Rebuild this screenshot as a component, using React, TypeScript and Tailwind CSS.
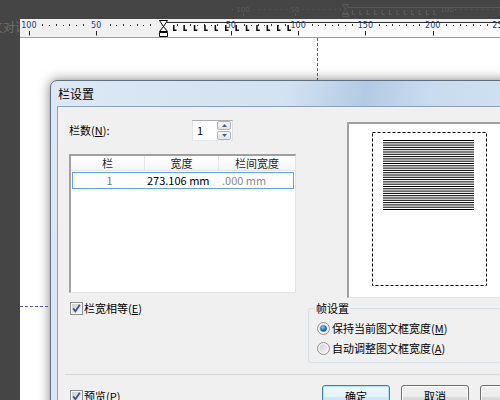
import React from "react";

const FONT = '"Noto Sans CJK SC", "Noto Sans", sans-serif';

function GhostRuler() {
  const dots: number[] = [];
  for (let x = 232; x < 340; x += 5.4) dots.push(x);
  const ls: number[] = [];
  for (let i = 0; i < 12; i++) ls.push(352 + i * 7.4);
  const dots2: number[] = [];
  for (let x = 455; x < 500; x += 5.4) dots2.push(x);
  return (
    <svg width="500" height="19" className="absolute left-0 top-0">
      <g fill="#5b5b5b" fontSize="7" fontFamily="DejaVu Sans, sans-serif">
        <text x="243" y="12" textAnchor="middle">100</text>
        <text x="295" y="12" textAnchor="middle">50</text>
        <text x="447" y="12" textAnchor="middle">100</text>
      </g>
      <line x1="243.5" y1="13" x2="243.5" y2="16" stroke="#5b5b5b" />
      <line x1="295.5" y1="13" x2="295.5" y2="16" stroke="#5b5b5b" />
      {dots.map((x, i) =>
        Math.abs(x - 243) < 7 || Math.abs(x - 295) < 6 ? null : (
          <rect key={i} x={x} y="9" width="1" height="1" fill="#5e5e5e" />
        )
      )}
      {dots2.map((x, i) => (
        <rect key={i} x={x} y="9" width="1" height="1" fill="#5e5e5e" />
      ))}
      <line x1="348" y1="7.5" x2="500" y2="7.5" stroke="#585858" />
      <path d="M342.5 4.5 H348.5 L345.5 9.5 Z M345.5 9.5 L348.5 13.5 H342.5 Z M342.5 14.5 H348.5 V16.5 H342.5 Z" fill="none" stroke="#5a5a5a" />
      {ls.map((x, i) => (
        <path key={i} d={`M${x + 0.5} 10 V14.5 H${x + 3}`} fill="none" stroke="#5a5a5a" strokeWidth="1.2" />
      ))}
    </svg>
  );
}

function Ruler() {
  const z = 143.5;
  const k = 1.346;
  const majors = [-100, -50, 0, 50, 100, 150, 200, 250];
  const minors: number[] = [];
  for (let u = -115; u <= 260; u += 5) {
    if (u % 50 === 0) continue;
    const m = ((u % 50) + 50) % 50;
    if (m === 5 || m === 45) continue;
    if (u > -5 && u < 5) continue;
    minors.push(u);
  }
  const ls: number[] = [];
  for (let i = 0; i < 12; i++) ls.push(153 + i * 10.4);
  return (
    <div className="h-[19px] shrink-0 border-b border-[#a0a0a0] bg-[#f0f0f0]">
      <svg width="480" height="18" className="block">
        <rect x="147" y="3" width="333" height="15" fill="#fafafa" />
        <line x1="147" y1="3.5" x2="480" y2="3.5" stroke="#2b2b2b" />
        {minors.map((u) => {
          const x = Math.round(z + u * k);
          const tall = u % 10 === 0;
          return <rect key={u} x={x} y={tall ? 5 : 6} width="1" height={tall ? 2 : 1} fill="#333" />;
        })}
        {majors.map((u) =>
          u === 0 ? null : (
            <g key={u}>
              <line x1={Math.round(z + u * k) + 0.5} y1="12" x2={Math.round(z + u * k) + 0.5} y2="16.5" stroke="#222" />
              <text
                x={z + u * k}
                y="9"
                textAnchor="middle"
                fontSize="8"
                fontFamily="DejaVu Sans, sans-serif"
                fill="#1d3f73"
              >
                {Math.abs(u)}
              </text>
            </g>
          )
        )}
        {ls.map((x, i) => (
          <path key={i} d={`M${x + 0.75} 6 V11.25 H${x + 3.5}`} fill="none" stroke="#000" strokeWidth="1.5" />
        ))}
        <path
          d="M139.5 1.5 H147.5 L143.5 7.5 Z M143.5 7.5 L147.5 12.5 H139.5 Z M139.5 13.5 H147.5 V17.5 H139.5 Z"
          fill="#fff"
          stroke="#000"
        />
      </svg>
    </div>
  );
}

function CheckBox() {
  return (
    <svg width="13" height="13" viewBox="0 0 13 13" className="shrink-0">
      <defs>
        <linearGradient id="cbg" x1="0" y1="0" x2="1" y2="1">
          <stop offset="0" stopColor="#cbcfd5" />
          <stop offset="1" stopColor="#f6f6f6" />
        </linearGradient>
      </defs>
      <rect x="0.5" y="0.5" width="12" height="12" fill="#f4f4f4" stroke="#8e8f8f" />
      <rect x="2" y="2" width="9" height="9" fill="url(#cbg)" />
      <path d="M3.2 6.4 L5.4 9.2 L9.8 2.8" fill="none" stroke="#3b4f86" strokeWidth="1.7" />
    </svg>
  );
}

function Radio({ on }: { on?: boolean }) {
  return (
    <svg width="13" height="13" viewBox="0 0 13 13" className="shrink-0">
      <defs>
        <linearGradient id="rbg" x1="0" y1="0" x2="1" y2="1">
          <stop offset="0" stopColor="#cfd3d8" />
          <stop offset="1" stopColor="#f7f7f7" />
        </linearGradient>
        <radialGradient id="rdot" cx="0.4" cy="0.35" r="0.7">
          <stop offset="0" stopColor="#8fd0fb" />
          <stop offset="0.5" stopColor="#2a7fcb" />
          <stop offset="1" stopColor="#18457e" />
        </radialGradient>
      </defs>
      <circle cx="6.5" cy="6.5" r="6" fill="#f4f4f4" stroke="#8e8f8f" />
      <circle cx="6.5" cy="6.5" r="4.3" fill="url(#rbg)" />
      {on && <circle cx="6.5" cy="6.5" r="3.3" fill="url(#rdot)" />}
    </svg>
  );
}

function Spinner() {
  return (
    <div className="flex h-[21px] w-[41px] items-center border border-[#abadb3] border-b-[#e3e9ef] border-l-[#e2e3ea] border-r-[#dbdfe6] bg-white">
      <span className="flex-1 pl-[4px] text-[11px] leading-none">1</span>
      <div className="mr-[1px] flex flex-col gap-[1px]">
        <div className="flex h-[9px] w-[14px] items-center justify-center rounded-[2px] border border-[#b3b3b3] bg-[linear-gradient(#f6f6f6,#e3e3e3)]">
          <svg width="5" height="3" viewBox="0 0 5 3">
            <path d="M0 3 L2.5 0 L5 3 Z" fill="#4d6185" />
          </svg>
        </div>
        <div className="flex h-[9px] w-[14px] items-center justify-center rounded-[2px] border border-[#b3b3b3] bg-[linear-gradient(#f6f6f6,#e3e3e3)]">
          <svg width="5" height="3" viewBox="0 0 5 3">
            <path d="M0 0 L2.5 3 L5 0 Z" fill="#4d6185" />
          </svg>
        </div>
      </div>
    </div>
  );
}

function Preview() {
  const lines: number[] = [];
  for (let i = 0; i < 31; i++) lines.push(16.5 + i * 2.3);
  return (
    <div className="ml-[51px] mt-[2px] h-[176px] w-[200px] shrink-0 border-b border-l-2 border-t-2 border-b-[#e3e3e3] border-l-[#a0a0a0] border-t-[#a0a0a0] bg-white">
      <svg width="198" height="173" className="block">
        <rect x="23.5" y="8.5" width="114" height="153" fill="none" stroke="#000" strokeDasharray="3 2" />
        {lines.map((y, i) => (
          <line key={i} x1="34" y1={y} x2="125" y2={y} stroke="#000" strokeWidth="1" />
        ))}
      </svg>
    </div>
  );
}

function Button({ children, def }: { children: React.ReactNode; def?: boolean }) {
  return def ? (
    <div className="flex h-[23px] w-[68px] shrink-0 items-center justify-center rounded-[3px] border border-[#3c7fb1] bg-[linear-gradient(#f1f8fd,#e3f1fb_50%,#d2e8f8_50%,#c4e1f6)] text-[11px] shadow-[inset_0_0_0_1px_#aee3fb]">
      {children}
    </div>
  ) : (
    <div className="flex h-[23px] w-[68px] shrink-0 items-center justify-center rounded-[3px] border border-[#707070] bg-[linear-gradient(#f2f2f2,#ebebeb_50%,#dddddd_50%,#cfcfcf)] text-[11px] shadow-[inset_0_0_0_1px_#fbfbfb]">
      {children}
    </div>
  );
}

function Dialog() {
  return (
    <div className="absolute left-[50px] top-[80px] flex h-[340px] w-[470px] flex-col rounded-t-[7px] border border-[#5f6f82] bg-[linear-gradient(100deg,#dce8f4_0%,#d3e2f1_45%,#b2cae5_60%,#c9dbee_72%,#d6e4f3_100%)] pl-[6px] shadow-[0_0_12px_rgba(0,0,0,0.5)]">
      <div className="flex h-[25px] shrink-0 items-center pl-[1px] text-[12px] leading-none text-black">栏设置</div>
      <div className="flex flex-1 flex-col border border-[#8da1bb] bg-[#f0f0f0] pl-[11px] pt-[13px] text-[11px] text-black">
        <div className="flex items-start">
          <div className="flex w-[227px] shrink-0 flex-col">
            <div className="flex h-[21px] items-center">
              <span className="w-[123px] shrink-0 leading-none">
                栏数(<u>N</u>):
              </span>
              <Spinner />
            </div>
            <div className="mt-[13px] flex h-[139px] flex-col border-b border-l-2 border-r border-t-2 border-b-[#e3e3e3] border-l-[#a0a0a0] border-r-[#e3e3e3] border-t-[#a0a0a0] bg-white">
              <div className="flex h-[15px] border-b border-[#e5e5e5] bg-[linear-gradient(#ffffff,#f4f5f7)] leading-[14px] text-[#1e1e1e]">
                <div className="w-[74px] border-r border-[#e5e5e5] text-center">栏</div>
                <div className="w-[74px] border-r border-[#e5e5e5] text-center">宽度</div>
                <div className="flex-1 text-center">栏间宽度</div>
              </div>
              <div className="mx-[1px] mt-[1px] flex h-[17px] items-center border border-[#5ea3e6] leading-none">
                <div className="w-[73px] text-center text-[#7a7a7a]">1</div>
                <div className="w-[74px] pl-[1px] text-black">273.106 mm</div>
                <div className="flex-1 pl-[2px] text-[#8a8a8a]">.000 mm</div>
              </div>
            </div>
          </div>
          <Preview />
        </div>
        <div className="mt-[4px] flex items-start">
          <div className="flex h-[13px] w-[239px] shrink-0 items-center gap-[1px] pl-[1px]">
            <CheckBox />
            <span className="leading-none">
              栏宽相等(<u>E</u>)
            </span>
          </div>
          <fieldset className="w-[220px] rounded-[3px] border border-[#d5dfe5] pb-[4px] pl-[8px] pt-[4px]">
            <legend className="-ml-[2px] px-[1px] leading-[12px]">帧设置</legend>
            <div className="flex h-[20px] items-center gap-[2px]">
              <Radio on />
              <span className="leading-none">
                保持当前图文框宽度(<u>M</u>)
              </span>
            </div>
            <div className="flex h-[20px] items-center gap-[2px]">
              <Radio />
              <span className="leading-none">
                自动调整图文框宽度(<u>A</u>)
              </span>
            </div>
          </fieldset>
        </div>
        <div className="-ml-[4px] mt-[11px] border-t border-[#d8d8d8]" />
        <div className="mt-[10px] flex items-center">
          <div className="flex w-[253px] shrink-0 items-center gap-[1px] pl-[1px]">
            <CheckBox />
            <span className="leading-none">
              预览(<u>P</u>)
            </span>
          </div>
          <div className="flex gap-[11px]">
            <Button def>确定</Button>
            <Button>取消</Button>
            <Button>帮助</Button>
          </div>
        </div>
      </div>
    </div>
  );
}

export default function App() {
  return (
    <div className="relative h-[400px] w-[500px] overflow-hidden bg-[#454545] text-black" style={{ fontFamily: FONT }}>
      <div className="flex h-full flex-col">
        <div className="relative h-[19px] shrink-0">
          <GhostRuler />
        </div>
        <div className="flex min-h-0 flex-1">
          <div className="relative w-[20px] shrink-0 overflow-hidden">
            <span className="absolute left-[-9px] top-[-1px] whitespace-nowrap text-[12px] text-[#6d6d6d]">文对话</span>
          </div>
          <div className="flex flex-1 flex-col">
            <Ruler />
            <div className="relative flex-1 bg-white">
              <svg className="absolute left-0 top-0" width="480" height="362">
                <line x1="297.5" y1="0" x2="297.5" y2="362" stroke="#5a5aa6" strokeDasharray="3 2" />
                <line x1="0" y1="268.5" x2="480" y2="268.5" stroke="#5a5aa6" strokeDasharray="3 2" />
              </svg>
            </div>
          </div>
        </div>
      </div>
      <Dialog />
    </div>
  );
}
